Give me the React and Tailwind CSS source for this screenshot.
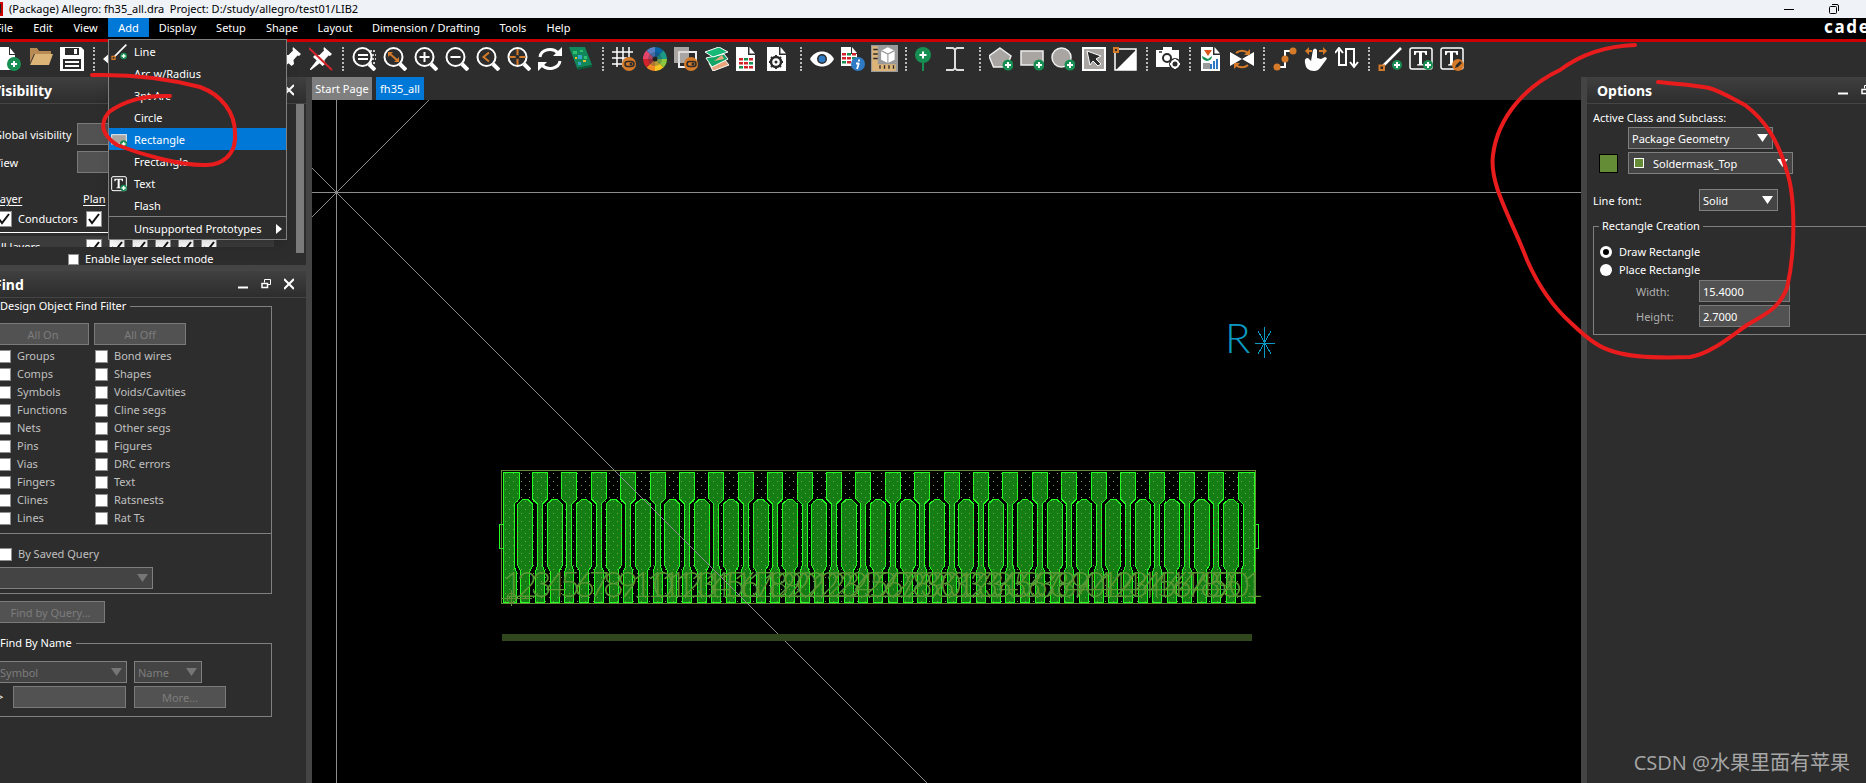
import React from 'react';

const SANS = "font-['Noto_Sans','Open_Sans','Noto_Sans_CJK_SC',sans-serif]";

const Icon = ({ children, size = 24 }) => (
    <svg width={size} height={size} viewBox="0 0 24 24" fill="none" className="shrink-0">{children}</svg>
);

const Plus = ({ x = 17, y = 18, r = 6 }) => (
    <g>
        <circle cx={x} cy={y} r={r} fill="#178f52" />
        <path d={`M${x - 3} ${y}h6M${x} ${y - 3}v6`} stroke="#fff" strokeWidth="2" />
    </g>
);

const Toggle = () => (
    <g>
        <circle cx="17" cy="17" r="7" fill="#d47a28" />
        <rect x="13" y="14.5" width="9" height="5" rx="2.5" stroke="#2b2b2b" strokeWidth="1.5" />
        <circle cx="19" cy="17" r="1.5" fill="#2b2b2b" />
    </g>
);

const Lens = ({ children }) => (
    <Icon>
        <circle cx="10.5" cy="10" r="9" stroke="#fff" strokeWidth="2" />
        <path d="M17 17l6 6" stroke="#fff" strokeWidth="4" />
        {children}
    </Icon>
);

const Page = ({ shift = -3, children }) => (
    <g transform={`translate(${shift} 0)`}>
        <path d="M3 0h12v8h7v16H3z" fill="#fff" />
        <path d="M16.500 0l5.500 6.500h-5.500z" fill="#fff" />
        {children}
    </g>
);

const Cells = ({ x = 6, y = 11 }) => (
    <g>
        {[0, 1, 2].map((r) => [0, 1, 2].map((c) => (
            <rect key={`${r}${c}`} x={x + c * 5} y={y + r * 4} width="4" height="2.500" fill={(r * 2 + c) % 3 === 1 ? '#178f52' : '#d2232a'} />
        )))}
    </g>
);

const TextBox = ({ children }) => (
    <Icon>
        <rect x="1" y="1" width="22" height="21" rx="2" stroke="#fff" strokeWidth="1.500" />
        <path d="M5 4h13v4h-1.500l-1-2.500h-2.500v11.500l2 .5v1h-7v-1l2-.5V5.500H7.500L6.500 8H5z" fill="#fff" />
        {children}
    </Icon>
);

const LineIcon = ({ size }) => (
    <Icon size={size}>
        <path d="M4 20L23 1" stroke="#fff" strokeWidth="2.500" />
        <rect x="1.500" y="18.500" width="4.500" height="4.500" fill="#2b2b2b" stroke="#d47a28" strokeWidth="2" />
        <Plus x={19} y={18} r={5} />
    </Icon>
);

const RectIcon = ({ size }) => (
    <Icon size={size}>
        <rect x="1" y="4" width="22" height="14" fill="#a9a5a2" stroke="#eee" strokeWidth="1.500" />
        <Plus x={19} y={18} r={5.500} />
    </Icon>
);

const Pin = () => (
    <g fill="#fff">
        <path d="M15 0l8 7-2 2-1.500-.5-4 4.500.5 4-2.500 2L4 10l2-2h4.500l4.500-4.500-.5-1.500z" />
        <path d="M8 13l3 3-9 7H1v-1z" />
    </g>
);

const Sep = () => <span className="h-6 w-[5px] shrink-0 flex justify-center"><span className="h-6 border-l-2 border-dotted border-[#b9b9b9]" /></span>;

const fileTools = [
    ['New', <Icon><path d="M2 0h9v8h6v15H-4V0z" fill="#fff" /><path d="M12 1l5 6h-5z" fill="#fff" /><Plus x={16} y={17} r={7} /></Icon>],
    ['Open', <Icon><path d="M1 1h7l2 3h12v3H5L1 16z" fill="#b98b54" /><path d="M6 7h18l-4 11H1z" fill="#dcb477" /></Icon>],
    ['Save', <Icon><path d="M0 0h21l3 3v21H0z" fill="#fff" /><path d="M5 1h14v7H5zM3 12h18v10H3z" fill="#2b2b2b" /><path d="M14 2h3v5h-3zM5 14h14v2H5zM5 18h14v2H5z" fill="#fff" /></Icon>],
];

const pinTools = [
    ['Fix', <Icon><Pin /></Icon>],
    ['Unfix', <Icon><Pin /><path d="M0 1l23 22" stroke="#d2232a" strokeWidth="2" /></Icon>],
];

const toolGroups = [
    [
        ['Zoom Fit', <Lens><path d="M6 8h10M6 12h10" stroke="#fff" strokeWidth="2" /><path d="M18 4h6M20 8h4M20 12h4M18 16h6" stroke="#fff" strokeWidth="1.500" strokeDasharray="2 1" /></Lens>],
        ['Zoom Points', <Lens><path d="M6.500 6.500l8 7" stroke="#d47a28" strokeWidth="2" /><path d="M5 5h5l-5 5zM16 15h-5l5-5z" fill="#d47a28" /></Lens>],
        ['Zoom In', <Lens><path d="M5.500 10h10M10.500 5v10" stroke="#fff" strokeWidth="2" /></Lens>],
        ['Zoom Out', <Lens><path d="M5.500 10h10" stroke="#fff" strokeWidth="2" /></Lens>],
        ['Zoom Previous', <Lens><path d="M13 5.500L7.500 10l5.500 4.500" stroke="#d47a28" strokeWidth="2" /></Lens>],
        ['Zoom Center', <Lens><path d="M10.500 2v16M2.500 10h16" stroke="#d47a28" strokeWidth="2" /><circle cx="10.500" cy="10" r="2" fill="#2b2b2b" /></Lens>],
        ['Redraw', <Icon><path d="M2 10a10 8.500 0 0 1 18-4M22 14a10 8.500 0 0 1-18 4" stroke="#fff" strokeWidth="3" /><path d="M24 0v9h-9zM0 24v-9h9z" fill="#fff" /></Icon>],
        ['Board', <Icon><path d="M0 0h16l7 18-15 3z" fill="#12875a" /><path d="M8 21l15-3v2L8 23z" fill="#0b5c3a" /><path d="M4 4h4v3H4zM11 3h3v2h-3zM15 9h3v3h-3z" fill="#2fc06f" /><path d="M9 8h4v4H9zM9 15h3v3H9z" fill="#35a3c9" /><path d="M14 13h3v2h-3zM6 10h2v2H6z" fill="#e3c02c" /></Icon>],
    ],
    [
        ['Grid Toggle', <Icon><path d="M5 0v20M11 0v20M17 0v10M0 5h21M0 11h15M0 17h11" stroke="#fff" strokeWidth="1.500" /><Toggle /></Icon>],
        ['Color', <Icon>
            {['#0a64a4', '#1d9a87', '#8cc63f', '#f3c623', '#f08a24', '#d2232a', '#e3456b', '#5b7fc4'].map((c, i) => (
                <path key={c} d="M12 12V0a12 12 0 0 1 8.500 3.500z" fill={c} transform={`rotate(${i * 45} 12 12)`} />
            ))}
            <circle cx="12" cy="12" r="7" fill="#1f3a5a" opacity=".3" />
            <circle cx="12" cy="12" r="2.500" fill="#222" />
        </Icon>],
        ['Shadow', <Icon><rect x="5" y="5" width="17" height="15" fill="#2b2b2b" stroke="#eee" strokeWidth="2" /><rect x="0" y="0" width="15" height="16" fill="#a9a5a2" /><path d="M5 18V5h15" stroke="#eee" strokeWidth="1.500" /><Toggle /></Icon>],
        ['Layers', <Icon>
            <path d="M4 16l16-3 4 5-16 6z" fill="#e9a57c" stroke="#fff" />
            <path d="M1 11l18-4 4 5-16 8z" fill="#12a566" stroke="#fff" />
            <path d="M0 5l14-5 9 5-15 5z" fill="#16b978" stroke="#fff" />
            <path d="M9 14l8-6 2 4z" fill="#e9a57c" />
        </Icon>],
        ['Spreadsheet', <Icon><Page><Cells /></Page></Icon>],
        ['Parameters', <Icon><Page>
            <circle cx="12" cy="15" r="5" stroke="#2b2b2b" strokeWidth="2.500" />
            <path d="M12 8v3M12 19v3M5 15h3M16 15h3M7 10l2 2M15 18l2 2M17 10l-2 2M9 18l-2 2" stroke="#2b2b2b" strokeWidth="2" />
            <circle cx="12" cy="15" r="1.500" fill="#2b2b2b" />
        </Page></Icon>],
    ],
    [
        ['Show', <Icon><path d="M0 12C5 2 19 2 24 12C19 22 5 22 0 12z" fill="#fff" /><circle cx="12" cy="12" r="5" fill="#2b2b2b" /><circle cx="12" cy="12" r="3.500" fill="#2f7ac4" /></Icon>],
        ['Info', <Icon><path d="M0 0h10v7h6v12H0z" fill="#fff" /><path d="M11 0l5 6h-5z" fill="#fff" /><Cells x={1} y={6} /><circle cx="17" cy="17" r="7" fill="#2f7ac4" /><path d="M18 12.500v2M18 16l-2 6M15 16.500h3" stroke="#fff" strokeWidth="1.800" /></Icon>],
        ['3D View', <Icon size={27}>
            <path d="M0 0h24v24H0z" fill="#9a9a9a" />
            <path d="M1 1h5v16h16v6H1z" fill="#dcb477" />
            <path d="M2 4h4M2 8h4M2 12h4M8 18v3M12 18v3M16 18v3M20 18v3" stroke="#2b2b2b" strokeWidth="1.200" />
            <path d="M15 2l6 3v8l-6 3-6-3V5z" fill="#fff" />
            <path d="M9 5l6 3 6-3M15 8v8" stroke="#9a9a9a" />
        </Icon>],
    ],
    [
        ['Place', <Icon><path d="M8 12v12" stroke="#178f52" strokeWidth="2" /><circle cx="8" cy="8" r="8" fill="#178f52" /><path d="M4.500 8h7M8 4.500v7" stroke="#fff" strokeWidth="2" /></Icon>],
        ['Measure', <Icon><path d="M0 1h7l2 1.500L11 1h7M0 23h7l2-1.500L11 23h7M9 2v20" stroke="#ddd" strokeWidth="2" /></Icon>],
    ],
    [
        ['Add Polygon', <Icon><path d="M11 1l11 8-4.500 11h-13L0 9z" fill="#a9a5a2" stroke="#eee" strokeWidth="1.500" /><Plus x={19} y={18} r={5.500} /></Icon>],
        ['Add Rect', <RectIcon />],
        ['Add Circle', <Icon><circle cx="10.500" cy="10.500" r="9.500" fill="#a9a5a2" stroke="#eee" strokeWidth="1.500" /><Plus x={19} y={18} r={5.500} /></Icon>],
        ['Select Shape', <Icon><rect x="1" y="1" width="22" height="22" fill="#a9a5a2" stroke="#fff" strokeWidth="2" /><path d="M5 4l14 5-5 3 5 5-3 2-5-5-3 4z" fill="#2b2b2b" stroke="#fff" /></Icon>],
        ['Void', <Icon><path d="M2 2h21v21H2z" fill="#2b2b2b" stroke="#fff" strokeWidth="1.500" /><path d="M23 3v20H3z" fill="#fff" /><rect x="1" y="1" width="4" height="4" fill="#2b2b2b" stroke="#d47a28" strokeWidth="2" /></Icon>],
    ],
    [
        ['Snapshot', <Icon><path d="M7 0h9v3h7v17H0V3h7z" fill="#fff" /><circle cx="11" cy="11" r="4" stroke="#2b2b2b" strokeWidth="2" /><path d="M3 5h3" stroke="#2b2b2b" strokeWidth="1.500" /><circle cx="19" cy="17" r="6" fill="#2b2b2b" /><circle cx="19" cy="17" r="3.500" stroke="#fff" strokeWidth="2" /><path d="M19 12v2M19 20v2M14 17h2M22 17h2" stroke="#fff" strokeWidth="2" /></Icon>],
    ],
    [
        ['Report', <Icon><Page shift={-1} /><path d="M5 3h8l-4 6z" fill="#d8581c" /><path d="M3 9a5 5 0 0 0 10 0l-4 3z" fill="#178f52" /><path d="M4 16h7v6H4z" fill="#9a9a9a" /><path d="M12 22v-5M15 22v-8M18 22V12" stroke="#2f7ac4" strokeWidth="2" /></Icon>],
        ['Mirror', <Icon><path d="M0 5l12 7-12 7zM24 5l-12 7 12 7z" fill="#fff" /><path d="M6 6a8 7 0 0 1 12 0M18 18a8 7 0 0 1-12 0" stroke="#d47a28" strokeWidth="2" /><path d="M20 2v6h-6zM4 22v-6h6z" fill="#d47a28" /></Icon>],
    ],
    [
        ['Route', <Icon><path d="M4 20h8v-8V4h8" stroke="#fff" strokeWidth="2" /><circle cx="4" cy="20" r="3.500" fill="#d47a28" /><circle cx="12" cy="12" r="3.500" fill="#d47a28" /><circle cx="20" cy="4" r="3.500" fill="#d47a28" /></Icon>],
        ['Slide', <Icon><path d="M9 3q2-3 4 0v8l4 1 4-2q3 1 1 3l-6 8q-2 3-6 3-8 0-9-8-1-5 3-5l3 3z" fill="#fff" /><path d="M3 4h5M15 4h6" stroke="#d47a28" strokeWidth="2" /><path d="M5 0v8L1 4zM19 0v8l4-4z" fill="#d47a28" /></Icon>],
        ['Delay Tune', <Icon><path d="M4 3v15h7V2h8v18" stroke="#fff" strokeWidth="2" /><path d="M0 6l4-5 4 5M15 15l4 5 4-5" stroke="#fff" strokeWidth="2" /></Icon>],
    ],
    [
        ['Add Line', <LineIcon />],
        ['Add Text', <TextBox><Plus x={19} y={18} r={5} /></TextBox>],
        ['Edit Text', <TextBox><circle cx="18" cy="18" r="6" fill="#d47a28" /><path d="M15 21l1-3 4-4 2 2-4 4z" fill="#2b2b2b" /></TextBox>],
    ],
];

const Tools = ({ items }) => items.map(([name, icon]) => (
    <button key={name} aria-label={name} className="w-6 h-7 shrink-0 flex items-center justify-center">{icon}</button>
));

const menus = [
    ['File', 'w-[23px]'], ['Edit', 'w-10'], ['View', 'w-[45px]'], ['Add', 'w-[41px]'], ['Display', 'w-[57px]'],
    ['Setup', 'w-[50px]'], ['Shape', 'w-[52px]'], ['Layout', 'w-[54px]'], ['Dimension / Drafting', 'w-32'], ['Tools', 'w-[46px]'], ['Help', 'w-[45px]'],
];

const addMenu = [
    ['Line', <LineIcon size={16} />], ['Arc w/Radius'], ['3pt Arc'], ['Circle'], ['Rectangle', <RectIcon size={16} />],
    ['Frectangle'], ['Text', <TextBox><Plus x={19} y={18} r={5} /></TextBox>], ['Flash'],
];

const AddMenu = () => (
    <div className="absolute left-0 top-[21px] z-20 w-[179px] border border-[#808080] bg-[#2d2d2d] text-[11px] shadow-lg">
        {addMenu.map(([name, icon]) => (
            <button key={name} className={`flex h-[22px] w-full items-center pt-px ${name === 'Rectangle' ? 'bg-[#0078d7]' : ''}`}>
                <span className="flex w-[25px] items-center pl-0.5 [&>svg]:size-4">{icon}</span>
                {name}
            </button>
        ))}
        <button className="flex h-[23px] w-full items-center justify-between border-t border-[#808080] pl-[25px] pr-1 pt-0.5">
            Unsupported Prototypes
            <svg width="6" height="10"><path d="M0 0l6 5-6 5z" fill="#fff" /></svg>
        </button>
    </div>
);

const PanelHeader = ({ title, className }) => (
    <header className={`flex h-[27px] shrink-0 items-center border-b border-[#454545] bg-linear-to-b from-[#404040] to-[#2d2d2d] ${className}`}>
        <h2 className="flex-1 pt-0.5 text-[14px] font-bold">{title}</h2>
        <div className="flex items-center gap-3">
            <button aria-label="Minimize"><svg width="11" height="12"><path d="M0 9.500h10" stroke="#fff" strokeWidth="2" /></svg></button>
            <button aria-label="Float"><svg width="11" height="12" fill="none" stroke="#fff"><path d="M3.500 4.500v-3h6v5h-3" /><path d="M1 5.500h5.500v4H1z" strokeWidth="1.500" /></svg></button>
            <button aria-label="Close"><svg width="10" height="12"><path d="M0 1l10 10M10 1L0 11" stroke="#fff" strokeWidth="2" /></svg></button>
        </div>
    </header>
);

const Check = ({ label, checked, size = 'size-[13px]', gap = 'gap-1.5', className = '' }) => (
    <label className={`flex items-center ${gap} ${className}`}>
        <span className="relative flex">
            <input type="checkbox" aria-label={label || 'Layer'} defaultChecked={checked} className={`${size} appearance-none border border-[#8f8f8f] bg-white`} />
            {checked && <svg viewBox="0 0 16 16" className="absolute inset-0 size-full"><path d="M3 8l3 4L13 3" fill="none" stroke="#111" strokeWidth="2" /></svg>}
        </span>
        {label}
    </label>
);

const Select = ({ label, value, disabled, className = '', pad = 'pl-[3px]' }) => (
    <span className={`relative block h-[22px] ${className}`}>
        <select aria-label={label} disabled={disabled} className={`h-full w-full appearance-none border border-[#7f7f7f] bg-[#444] pt-0.5 opacity-100 ${pad} ${disabled ? 'text-[#7d7d7d]' : 'text-white'}`}>
            <option>{value}</option>
        </select>
        <svg width="11" height="8" className="pointer-events-none absolute right-[5px] top-[7px]"><path d="M0 0h11L5.500 8z" fill={disabled ? '#767676' : '#fff'} /></svg>
    </span>
);

const Btn = ({ children, className = '' }) => (
    <button className={`h-[22px] border border-[#7a7a7a] bg-[#525252] pt-0.5 text-[#7d7d7d] ${className}`}>{children}</button>
);

const filters = [
    ['Groups', 'Bond wires'], ['Comps', 'Shapes'], ['Symbols', 'Voids/Cavities'], ['Functions', 'Cline segs'], ['Nets', 'Other segs'],
    ['Pins', 'Figures'], ['Vias', 'DRC errors'], ['Fingers', 'Text'], ['Clines', 'Ratsnests'], ['Lines', 'Rat Ts'],
];

const Visibility = () => (
    <section className="flex h-[188px] flex-col overflow-hidden bg-[#2d2d2d]">
        <PanelHeader title="Visibility" className="-ml-2 pr-3" />
        <div className="flex h-[151px]">
            <div className="flex-1 overflow-hidden">
                <div className="mt-[19px] flex h-[22px] items-center">
                    <span className="-ml-1.5 w-[83px] whitespace-nowrap pt-px">Global visibility</span>
                    <Btn className="w-[100px] text-white!">On</Btn>
                </div>
                <div className="mt-[6px] flex h-[22px] items-center">
                    <span className="-ml-1.5 w-[83px] pt-px">View</span>
                    <Btn className="w-[100px]" />
                </div>
                <div className="mt-4 flex h-5 items-center underline underline-offset-2"><span className="-ml-1.5 w-[89px]">Layer</span><span>Plan</span></div>
                <div className="flex h-5 items-center">
                    <Check label="Conductors" checked size="size-4" gap="gap-1.5" className="-ml-1 w-[90px]" />
                    <Check checked size="size-4" />
                </div>
                <div className="mt-[3px] h-[3px] w-[274px] border-t border-white" />
                <div className="mt-px flex h-[11px] w-[274px] items-start gap-[7px] overflow-hidden bg-[#3b3b3b] pt-[3px]">
                    <span className="-ml-1.5 w-[85px]">All layers</span>
                    {[0, 1, 2, 3, 4, 5].map((i) => <Check key={i} checked size="size-4" />)}
                </div>
            </div>
            <div className="mr-0.5 h-full w-2 bg-[#7b7b7b]" />
        </div>
        <Check label="Enable layer select mode" size="size-[11px]" gap="gap-1.5" className="ml-[68px] h-3" />
    </section>
);

const Find = () => (
    <section className="mt-1.5 flex-1 overflow-hidden bg-[#2d2d2d] text-[#c0c0c0]">
        <PanelHeader title="Find" className="-ml-1.5 pr-3 text-white" />
        <fieldset className="-ml-2 mr-[34px] h-[296px] border border-[#808080]">
            <legend className="ml-1.5 h-4 pl-px pr-1 leading-4 text-white">Design Object Find Filter</legend>
            <div className="mt-[9px] flex gap-[5px]"><Btn className="w-24 pl-1">All On</Btn><Btn className="w-[92px]">All Off</Btn></div>
            <div className="mt-[2px]">
                {filters.map(([a, b]) => (
                    <div key={a} className="flex h-[18px] items-center pl-[5px]">
                        <Check label={a} className="w-[97px]" />
                        <Check label={b} />
                    </div>
                ))}
            </div>
            <div className="mt-[6px] border-t border-[#808080] pt-3">
                <Check label="By Saved Query" className="pl-1.5" />
                <Select label="Saved query" disabled className="mt-[5px] w-40" />
            </div>
        </fieldset>
        <Btn className="-ml-2 mt-[7px] w-[113px] pl-1">Find by Query...</Btn>
        <fieldset className="-ml-2 mr-[34px] mt-3 h-[82px] border border-[#808080]">
            <legend className="ml-1.5 h-4 pl-px pr-1 leading-4 text-white">Find By Name</legend>
            <div className="mt-[10px] flex gap-[7px]">
                <Select label="Object type" value="Symbol" disabled className="w-[134px]" pad="pl-1.5" />
                <Select label="Match by" value="Name" disabled className="w-[68px]" />
            </div>
            <div className="mt-[3px] flex items-center">
                <span className="w-5 pl-1 text-white">&gt;</span>
                <input aria-label="Name" disabled className="h-[22px] w-[113px] border border-[#7a7a7a] bg-[#525252]" />
                <Btn className="ml-2 w-[92px]">More...</Btn>
            </div>
        </fieldset>
    </section>
);

const Radio = ({ label, checked }) => (
    <label className="flex h-[18px] items-center gap-[7px]">
        <input type="radio" name="mode" defaultChecked={checked} className="size-3 appearance-none rounded-full border-white bg-white checked:border-3 checked:bg-black" />
        {label}
    </label>
);

const Options = () => (
    <aside className="w-[285px] shrink-0 overflow-hidden border-l-6 border-[#444] bg-[#2d2d2d]">
        <PanelHeader title="Options" className="-mr-7 pl-2.5 pr-0" />
        <div className="pl-1.5">
            <p className="mt-[5px] h-[18px] leading-[17px]">Active Class and Subclass:</p>
            <Select label="Class" value="Package Geometry" className="ml-[35px] w-[145px]" />
            <div className="mt-[3px] flex h-[22px] items-center">
                <span className="ml-1.5 size-[19px] border border-black bg-[#648c37]" />
                <span className="relative ml-[10px] flex items-center">
                    <Select label="Subclass" value="Soldermask_Top" className="w-[165px]" pad="pl-6" />
                    <span className="pointer-events-none absolute left-1.5 size-2.5 border border-white bg-[#648c37]" />
                </span>
            </div>
            <div className="mt-[15px] flex h-[22px] items-center"><span className="w-[106px] pt-0.5">Line font:</span><Select label="Line font" value="Solid" className="w-[79px]" /></div>
            <fieldset className="-mr-4 mt-[7px] h-[117px] border border-[#808080]">
                <legend className="ml-[5px] h-4 px-[3px] leading-4">Rectangle Creation</legend>
                <div className="mt-[9px] pl-1.5">
                    <Radio label="Draw Rectangle" checked />
                    <Radio label="Place Rectangle" />
                </div>
                {[['Width:', '15.4000'], ['Height:', '2.7000']].map(([label, value]) => (
                    <label key={label} className="mb-[3px] mt-px flex items-center pl-[42px] text-[#b0b0b0]">
                        <span className="w-[63px] pt-0.5">{label}</span>
                        <input defaultValue={value} className="h-[22px] w-[91px] border border-[#7a7a7a] bg-[#525252] px-[3px] pt-px text-white" />
                    </label>
                ))}
            </fieldset>
        </div>
    </aside>
);

// footprint drawing, in window pixels offset by the canvas origin (312, 100)
const Footprint = () => {
    const pins = Array.from({ length: 51 }, (_, i) => i);
    const padPath = (i) => {
        const c = 510.6 + i * 14.7;
        if (i === 0) return 'M503 472h16v27l-5 5v62l2 5v31h-13z';
        if (i === 50) return 'M1254 472h-16v27l5 5v62l-2 5v31h13z';
        if (i % 2 === 0) return `M${c - 7.5} 472h15v27l-5 5v62l2 5v31h-9v-31l2-5v-62l-5-5z`;
        return `M${c - 7.5} 504l5-4.500h5l5 4.500v62l-3 5v31h-9v-31l-3-5z`;
    };
    return (
        <svg className="absolute left-0 top-0 h-full w-full" viewBox="312 100 1269 683" preserveAspectRatio="xMinYMin slice" shapeRendering="crispEdges" fill="none">
            <defs>
                <pattern id="dots" width="8" height="8" patternUnits="userSpaceOnUse">
                    <path d="M1 1h1v1H1zM5 5h1v1H5z" fill="#74a04a" />
                </pattern>
            </defs>
            <path d="M336.500 100v683M312 192.500h1269M312 217L429 100M312 168l615 615" stroke="#8c8c8c" />
            <path d="M503 524h-4v24h4M1254 524h4v24h-4" stroke="#22ff22" />
            {pins.map((i) => <path key={i} d={padPath(i)} fill="#147d14" stroke="#22ff22" />)}
            <rect x="503" y="472" width="752" height="131" fill="url(#dots)" />
            <rect x="501.500" y="470.500" width="754" height="133" stroke="#648c37" />
            <path d="M501 598.500h31M511.500 590v16" stroke="#648c37" />
            <circle cx="511.500" cy="598" r="4.500" stroke="#648c37" />
            <g className="font-['Lato'] font-light" fontSize="36" fill="#5a9a35">
                {pins.map((i) => <text key={i} x={502 + i * 14.4} y="597">{i + 1}</text>)}
            </g>
            <path d="M1065 589.500h175" stroke="#5a9a35" />
            <path d="M336 192l591 591" stroke="#8c8c8c" />
            <rect x="502" y="634" width="750" height="7" fill="#30461c" />
            <text x="1225" y="353" fontSize="42" fill="#0a9ac4" className="font-['Lato'] font-light">R</text>
            <path d="M1264.500 327v31M1255 343.500h20M1258 331l13 23M1271 331l-13 23" stroke="#0a9ac4" />
        </svg>
    );
};

export default function App() {
    return (
        <div className={`relative flex h-screen flex-col overflow-hidden bg-[#2d2d2d] text-[11px] leading-4 text-white ${SANS}`}>
            <div className="flex h-[18px] shrink-0 items-center overflow-hidden bg-[#eff3f8] text-black">
                <svg width="3" height="14" className="shrink-0"><path d="M0 0h3v14H0z" fill="#c00" /><path d="M0 2h1v9H0z" fill="#222" /></svg>
                <h1 className="ml-1.5 flex-1 whitespace-pre leading-4">(Package) Allegro: fh35_all.dra  Project: D:/study/allegro/test01/LIB2</h1>
                <button aria-label="Minimize" className="mr-[35px]"><svg width="10" height="12"><path d="M0 6.500h10" stroke="#000" /></svg></button>
                <button aria-label="Restore" className="mr-[27px]"><svg width="10" height="12" fill="none" stroke="#000"><rect x=".5" y="3.500" width="7" height="7" rx="1" /><path d="M3 1.500h5q1.500 0 1.500 1.500v5" /></svg></button>
            </div>
            <nav className="flex h-6 shrink-0 border-b-3 border-[#cc0000] bg-black">
                {menus.map(([name, w]) => (
                    <div key={name} className={`relative flex shrink-0 ${w} ${name === 'File' ? 'justify-end pr-2.5' : ''}`}>
                        <button className={`h-[19px] whitespace-nowrap pt-px ${name === 'File' ? '' : 'w-full'} ${name === 'Add' ? 'bg-[#0078d7]' : ''}`}>{name}</button>
                        {name === 'Add' && <AddMenu />}
                    </div>
                ))}
                <div className="ml-auto w-[42px] overflow-hidden text-[17px] font-bold leading-[18px] tracking-widest">cadence</div>
            </nav>
            <div className="flex h-[35px] shrink-0 items-center gap-[7px] overflow-hidden pb-0.5">
                <div className="-ml-0.5 flex shrink-0 items-center gap-[7px]"><Tools items={fileTools} /></div>
                <Sep />
                <button aria-label="Undo" className="w-6 shrink-0"><Icon><path d="M0 12l8-7v14zM6 9h16v6H6z" fill="#fff" /></Icon></button>
                <span className="w-[137px] shrink-0" />
                <Tools items={pinTools} />
                {toolGroups.map((group, i) => (
                    <React.Fragment key={i}><Sep /><Tools items={group} /></React.Fragment>
                ))}
            </div>
            <main className="flex min-h-0 flex-1">
                <aside className="flex w-[312px] shrink-0 flex-col border-r-6 border-[#444] bg-[#444]">
                    <Visibility />
                    <Find />
                </aside>
                <div className="flex min-w-0 flex-1 flex-col">
                    <div className="flex h-[23px] shrink-0 gap-1">
                        <button className="w-[60px] whitespace-nowrap bg-[#7f7f7f]">Start Page</button>
                        <button className="w-12 bg-[#0078d7]">fh35_all</button>
                    </div>
                    <div className="relative flex-1 overflow-hidden bg-black"><Footprint /></div>
                </div>
                <Options />
            </main>
            <svg width="250" height="180" fill="none" className="pointer-events-none absolute left-0 top-0 z-30" stroke="#e81c1c" strokeWidth="4" strokeLinecap="round">
                <path d="M92 75C135 74 170 79 200 87C222 95 235 113 235 133C237 157 219 165 207 165C180 166 140 154 117 145C102 135 99 124 109 112C125 100 145 95 170 96" />
            </svg>
            <svg width="390" height="370" viewBox="1476 0 390 370" fill="none" className="pointer-events-none absolute right-0 top-0 z-30" stroke="#e81c1c" strokeWidth="4" strokeLinecap="round">
                <path d="M1635 45C1605 46 1580 55 1560 70C1528 85 1498 115 1493 155C1489 185 1512 220 1527 260C1538 285 1553 307 1571 323C1590 341 1600 348 1615 352C1635 358 1665 358 1690 357C1710 354 1730 337 1747 325C1765 314 1778 310 1787 288C1796 250 1795 195 1787 172C1778 140 1765 120 1745 105C1730 97 1720 91 1709 88C1695 85 1675 84 1658 82" />
            </svg>
            <p className="absolute bottom-1.5 right-4 z-30 font-['Open_Sans','Noto_Sans_CJK_SC',sans-serif] text-[20px] leading-7 text-[#a6a6a6]">CSDN @水果里面有苹果</p>
        </div>
    );
}
